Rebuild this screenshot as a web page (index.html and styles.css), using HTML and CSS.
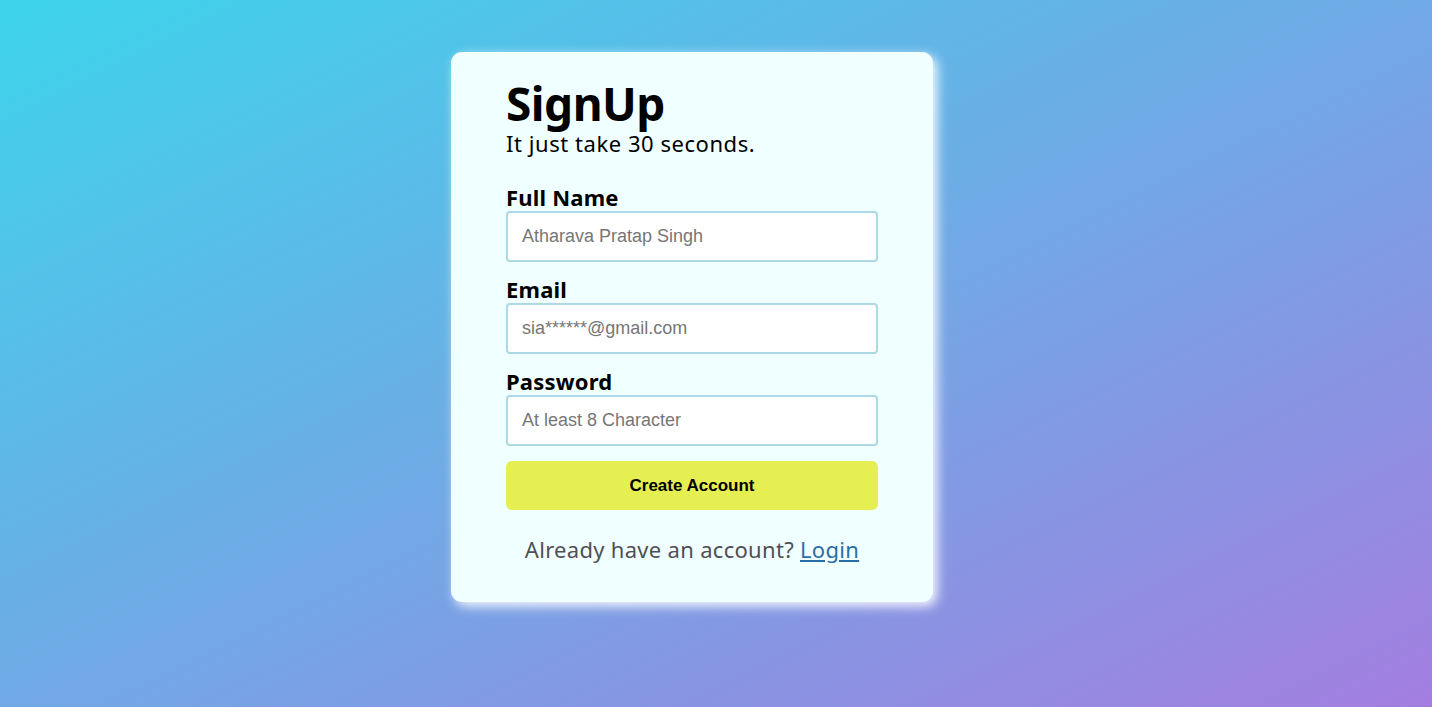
FILE: index.html
```html
<!DOCTYPE html>
<html lang="en">
<head>
<meta charset="utf-8">
<title>SignUp</title>
<link rel="stylesheet" href="styles.css">
</head>
<body>
<main class="page">
  <form class="card">
    <h1 class="title">SignUp</h1>
    <p class="subtitle">It just take 30 seconds.</p>
    <div class="fields">
      <label class="field">
        <span class="label">Full Name</span>
        <input class="input" type="text" placeholder="Atharava Pratap Singh">
      </label>
      <label class="field">
        <span class="label">Email</span>
        <input class="input" type="email" placeholder="sia******@gmail.com">
      </label>
      <label class="field">
        <span class="label">Password</span>
        <input class="input" type="password" placeholder="At least 8 Character">
      </label>
    </div>
    <button class="btn" type="button">Create Account</button>
    <p class="footer">Already have an account? <a class="link" href="#">Login</a></p>
  </form>
</main>
</body>
</html>
```
FILE: styles.css
```css
* { box-sizing: border-box; }
html, body { margin: 0; height: 100%; }
body {
  background: linear-gradient(to bottom right, #3dd4eb, #a37ee0);
  font-family: "Noto Sans", "DejaVu Sans", sans-serif;
}
.page {
  height: 707px;
  display: flex;
  justify-content: center;
  align-items: flex-start;
  padding-top: 52px;
  padding-right: 48px;
}
.card {
  width: 482px;
  background: #f0ffff;
  border-radius: 11px;
  padding: 26px 55px 39px;
  box-shadow: 4px 4px 12px rgba(255, 255, 255, 0.95);
  display: flex;
  flex-direction: column;
}
.title {
  margin: 0;
  font-size: 46px;
  line-height: 51px;
  font-weight: 700;
  letter-spacing: -0.5px;
  color: #000;
}
.subtitle {
  margin: 0;
  font-size: 22px;
  line-height: 28px;
  letter-spacing: 0.55px;
  color: #000;
}
.fields {
  margin-top: 26px;
  display: flex;
  flex-direction: column;
  gap: 13px;
}
.field { display: flex; flex-direction: column; }
.label {
  font-size: 22px;
  line-height: 28px;
  font-weight: 700;
  letter-spacing: 0.2px;
  color: #000;
}
.input {
  height: 51px;
  border: 2px solid #add8e6;
  border-radius: 4px;
  background: #fff;
  padding: 0 14px;
  font-family: "Liberation Sans", Arial, sans-serif;
  font-size: 18px;
  color: #333;
  outline: none;
}
.input::placeholder { color: #767676; }
.btn {
  margin-top: 15px;
  height: 49px;
  border: none;
  border-radius: 6px;
  background: #e5ef52;
  font-family: "Liberation Sans", Arial, sans-serif;
  font-weight: 700;
  font-size: 17px;
  color: #000;
}
.footer {
  margin: 25px 0 0;
  text-align: center;
  font-size: 22px;
  line-height: 28px;
  letter-spacing: 0.3px;
  color: #4f4f55;
}
.link { color: #2b6ea6; }
```
